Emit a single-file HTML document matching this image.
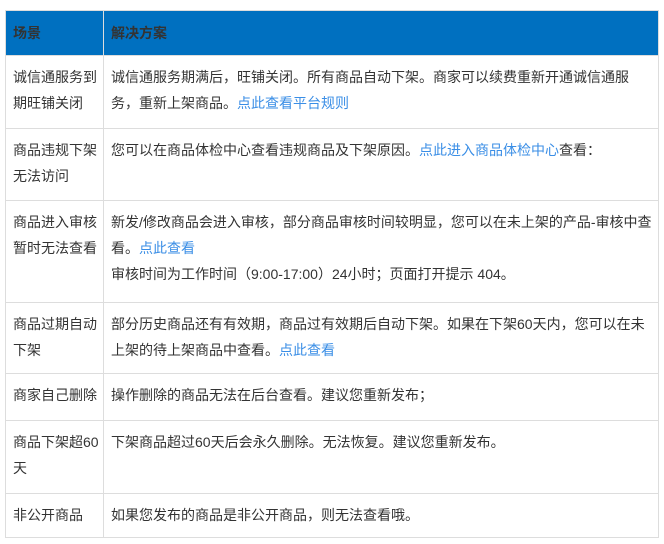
<!DOCTYPE html><html><head><meta charset="utf-8"><style>
body{margin:0;background:#fff;font-family:"Liberation Sans","Noto Sans CJK SC",sans-serif;font-size:14px;color:#333}
table{position:absolute;left:5px;top:10px;width:653px;border-collapse:collapse;table-layout:fixed}
td,th{border:1px solid #ddd;vertical-align:top;padding:8px 4px 0 7px;line-height:26px;text-align:left;overflow:hidden;word-break:break-all}
th{background:#0070c0;color:#333;font-weight:bold;vertical-align:middle;padding-top:0;height:44px}
a{color:#3a8ee6;text-decoration:none}
</style></head><body><table>
<colgroup><col style="width:98px"><col style="width:555px"></colgroup>
<tr><th>场景</th><th>解决方案</th></tr>
<tr style="height:73px"><td>诚信通服务到期旺铺关闭</td><td>诚信通服务期满后，旺铺关闭。所有商品自动下架。商家可以续费重新开通诚信通服务，重新上架商品。<a>点此查看平台规则</a></td></tr>
<tr style="height:72px"><td>商品违规下架无法访问</td><td>您可以在商品体检中心查看违规商品及下架原因。<a>点此进入商品体检中心</a>查看：</td></tr>
<tr style="height:102px"><td>商品进入审核暂时无法查看</td><td>新发/修改商品会进入审核，部分商品审核时间较明显，您可以在未上架的产品-审核中查看。<a>点此查看</a><br>审核时间为工作时间（9:00-17:00）24小时；页面打开提示 404。</td></tr>
<tr style="height:71px"><td>商品过期自动下架</td><td>部分历史商品还有有效期，商品过有效期后自动下架。如果在下架60天内，您可以在未上架的待上架商品中查看。<a>点此查看</a></td></tr>
<tr style="height:47px"><td>商家自己删除</td><td>操作删除的商品无法在后台查看。建议您重新发布；</td></tr>
<tr style="height:73px"><td>商品下架超60天</td><td>下架商品超过60天后会永久删除。无法恢复。建议您重新发布。</td></tr>
<tr style="height:44px"><td>非公开商品</td><td>如果您发布的商品是非公开商品，则无法查看哦。</td></tr>
</table></body></html>
